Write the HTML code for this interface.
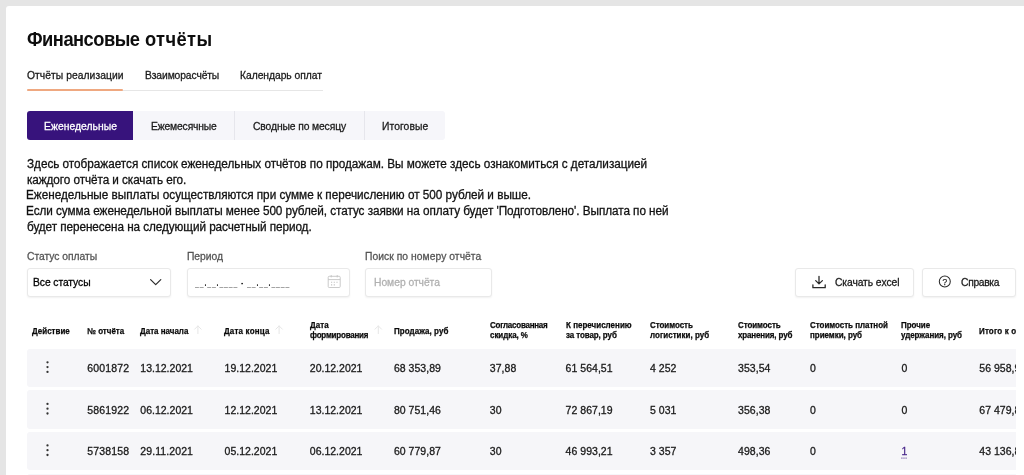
<!DOCTYPE html>
<html lang="ru"><head><meta charset="utf-8"><title>Финансовые отчёты</title>
<style>
html,body{margin:0;padding:0}
body{width:1024px;height:475px;overflow:hidden;background:#e5e5e5;font-family:"Liberation Sans",sans-serif;position:relative}
.card{position:absolute;left:6px;top:6px;width:1018px;height:480px;background:#fff;border-radius:3px 0 0 0}
.abs{position:absolute}
.clip{position:absolute;left:0;top:0;width:1016px;height:475px;overflow:hidden;will-change:transform}
.t{position:absolute;white-space:pre;display:block}
.r{-webkit-text-stroke:0.3px currentColor}
.b{-webkit-text-stroke:0.25px currentColor}
.row{position:absolute;left:27px;width:989px;height:38.4px;background:#f6f6f9;border-radius:3px 0 0 3px}
.inp{position:absolute;box-sizing:border-box;border:1px solid #e9e9e9;border-radius:3px;background:#fff;box-shadow:0 1px 2px rgba(0,0,0,.06)}
</style></head><body>
<div class="card"></div>
<div style="position:absolute;left:0;top:0;width:1024px;height:475px">
<!-- tabs underline -->
<div class="abs" style="left:27px;top:89.5px;width:296.2px;height:1px;background:#e6e6e6"></div>
<div class="abs" style="left:26.8px;top:88.6px;width:96.4px;height:2px;background:#efa880;border-radius:1px"></div>
<!-- segmented -->
<div class="abs" style="left:27px;top:111.3px;width:418px;height:28.5px;background:#f6f6fa;border-radius:3px"></div>
<div class="abs" style="left:27px;top:111.3px;width:106.3px;height:28.5px;background:#37137c;border-radius:3px 0 0 3px"></div>
<div class="abs" style="left:234.3px;top:111.3px;width:1px;height:28.5px;background:#e6e6ec"></div>
<div class="abs" style="left:363.8px;top:111.3px;width:1px;height:28.5px;background:#e6e6ec"></div>
<!-- inputs -->
<div class="inp" style="left:26.8px;top:268px;width:144px;height:28.6px"></div>
<div class="inp" style="left:187px;top:268px;width:162.6px;height:28.6px"></div>
<div class="inp" style="left:365px;top:268px;width:126.6px;height:28.6px"></div>
<div class="inp" style="left:795.2px;top:268px;width:119px;height:28.6px"></div>
<div class="inp" style="left:922px;top:268px;width:94px;height:28.6px"></div>
<!-- rows -->
<div class="row" style="top:348.7px"></div>
<div class="row" style="top:390.3px"></div>
<div class="row" style="top:431.9px"></div>
<div class="row" style="top:473.5px"></div>
<!-- icons -->
<svg class="abs" style="left:0;top:0;will-change:transform" width="1024" height="475" viewBox="0 0 1024 475" fill="none">
  <!-- chevron -->
  <path d="M150.6 279.6 L155.7 284.7 L160.8 279.6" stroke="#2b2b2b" stroke-width="1.2" stroke-linecap="round" stroke-linejoin="round"/>
  <!-- calendar -->
  <g stroke="#c4c4c4" stroke-width="0.9">
    <rect x="328.2" y="276.3" width="12" height="11.2" rx="1"/>
    <path d="M328.2 279.6H340.2M331.2 275V277.4M337.2 275V277.4"/>
    <path d="M331 282.3h1.2M333.7 282.3h1.2M336.4 282.3h1.2M331 284.9h1.2M333.7 284.9h1.2" stroke-width="1.1"/>
  </g>
  <!-- download -->
  <g stroke="#2b2b2b" stroke-width="1.3" stroke-linecap="round" stroke-linejoin="round">
    <path d="M819 276.3V283.6M815.7 280.6L819 283.9L822.4 280.6"/>
    <path d="M812.9 284.8V287.7H825.2V284.8"/>
  </g>
  <!-- help -->
  <circle cx="944.8" cy="281.5" r="5.5" stroke="#2b2b2b" stroke-width="1.05"/>
  <!-- sort arrows -->
  <g stroke="#e6e6e6" stroke-width="1" stroke-linecap="round" stroke-linejoin="round">
    <path d="M197.9 333.6V325.9M194.6 329.2L197.9 325.9L201.2 329.2"/>
    <path d="M279.1 333.6V325.9M275.8 329.2L279.1 325.9L282.4 329.2"/>
    <path d="M378.3 333.6V325.9M375 329.2L378.3 325.9L381.6 329.2"/>
  </g>
  <!-- kebabs -->
  <g fill="#333">
    <circle cx="47.5" cy="362.3" r="1.15"/><circle cx="47.5" cy="367.1" r="1.15"/><circle cx="47.5" cy="371.9" r="1.15"/>
    <circle cx="47.5" cy="403.9" r="1.15"/><circle cx="47.5" cy="408.7" r="1.15"/><circle cx="47.5" cy="413.5" r="1.15"/>
    <circle cx="47.5" cy="445.4" r="1.15"/><circle cx="47.5" cy="450.2" r="1.15"/><circle cx="47.5" cy="455.0" r="1.15"/>
  </g>
  <!-- dotted underline for link -->
  <path d="M901.3 458.1H907" stroke="#4b2a8c" stroke-width="0.9" stroke-dasharray="1.2 0.9"/>
  <text x="944.8" y="284.5" font-family="Liberation Sans, sans-serif" font-size="8.4" font-weight="400" fill="#2b2b2b" stroke="#2b2b2b" stroke-width="0.25" text-anchor="middle">?</text>
</svg>
<span class="abs" style="left:195.4px;top:274.8px;font-size:10.9px;line-height:14px;color:#2a2a2a;font-weight:700;letter-spacing:1.39px;white-space:pre;transform:scaleX(0.632);transform-origin:0 0">__.__.____ - __.__.____</span>

<div class="clip">
<span class="t" style="left:26.90px;top:24.81px;font-size:20.8px;line-height:27.04px;font-weight:700;color:#0d0d0d;letter-spacing:-0.578px;transform:scaleX(0.88);transform-origin:0 0">Финансовые</span>
<span class="t" style="left:144.90px;top:24.81px;font-size:20.8px;line-height:27.04px;font-weight:700;color:#0d0d0d;letter-spacing:0.452px;transform:scaleX(0.88);transform-origin:0 0">отчёты</span>
<span class="t r" style="left:26.80px;top:67.80px;font-size:11.1px;line-height:14.43px;font-weight:400;color:#1a1a1a;letter-spacing:0.048px;transform:scaleX(0.93);transform-origin:0 0">Отчёты реализации</span>
<span class="t r" style="left:144.60px;top:67.80px;font-size:11.1px;line-height:14.43px;font-weight:400;color:#1a1a1a;letter-spacing:-0.129px;transform:scaleX(0.93);transform-origin:0 0">Взаиморасчёты</span>
<span class="t r" style="left:240.20px;top:67.80px;font-size:11.1px;line-height:14.43px;font-weight:400;color:#1a1a1a;letter-spacing:-0.050px;transform:scaleX(0.93);transform-origin:0 0">Календарь оплат</span>
<span class="t r" style="left:43.50px;top:118.80px;font-size:11.1px;line-height:14.43px;font-weight:400;color:#ffffff;letter-spacing:0.055px;transform:scaleX(0.93);transform-origin:0 0">Еженедельные</span>
<span class="t r" style="left:151.10px;top:118.80px;font-size:11.1px;line-height:14.43px;font-weight:400;color:#1a1a1a;letter-spacing:-0.158px;transform:scaleX(0.93);transform-origin:0 0">Ежемесячные</span>
<span class="t r" style="left:252.70px;top:118.80px;font-size:11.1px;line-height:14.43px;font-weight:400;color:#1a1a1a;letter-spacing:-0.122px;transform:scaleX(0.93);transform-origin:0 0">Сводные по месяцу</span>
<span class="t r" style="left:381.60px;top:118.80px;font-size:11.1px;line-height:14.43px;font-weight:400;color:#1a1a1a;letter-spacing:0.075px;transform:scaleX(0.93);transform-origin:0 0">Итоговые</span>
<span class="t r" style="left:26.80px;top:156.01px;font-size:12.5px;line-height:16.25px;font-weight:400;color:#111111;letter-spacing:-0.024px;transform:scaleX(0.94);transform-origin:0 0">Здесь отображается список еженедельных отчётов по продажам. Вы можете здесь ознакомиться с детализацией</span>
<span class="t r" style="left:26.80px;top:171.66px;font-size:12.5px;line-height:16.25px;font-weight:400;color:#111111;letter-spacing:-0.074px;transform:scaleX(0.94);transform-origin:0 0">каждого отчёта и скачать его.</span>
<span class="t r" style="left:25.86px;top:187.32px;font-size:12.5px;line-height:16.25px;font-weight:400;color:#111111;letter-spacing:-0.010px;transform:scaleX(0.94);transform-origin:0 0">Еженедельные выплаты осуществляются при сумме к перечислению от 500 рублей и выше.</span>
<span class="t r" style="left:25.86px;top:202.96px;font-size:12.5px;line-height:16.25px;font-weight:400;color:#111111;letter-spacing:-0.057px;transform:scaleX(0.94);transform-origin:0 0">Если сумма еженедельной выплаты менее 500 рублей, статус заявки на оплату будет 'Подготовлено'. Выплата по ней</span>
<span class="t r" style="left:26.80px;top:218.62px;font-size:12.5px;line-height:16.25px;font-weight:400;color:#111111;letter-spacing:-0.073px;transform:scaleX(0.94);transform-origin:0 0">будет перенесена на следующий расчетный период.</span>
<span class="t r" style="left:26.80px;top:248.80px;font-size:11.1px;line-height:14.43px;font-weight:400;color:#555555;letter-spacing:-0.027px;transform:scaleX(0.93);transform-origin:0 0">Статус оплаты</span>
<span class="t r" style="left:187.00px;top:248.80px;font-size:11.1px;line-height:14.43px;font-weight:400;color:#555555;letter-spacing:-0.059px;transform:scaleX(0.93);transform-origin:0 0">Период</span>
<span class="t r" style="left:365.20px;top:248.80px;font-size:11.1px;line-height:14.43px;font-weight:400;color:#555555;letter-spacing:0.050px;transform:scaleX(0.93);transform-origin:0 0">Поиск по номеру отчёта</span>
<span class="t r" style="left:33.40px;top:274.50px;font-size:11.1px;line-height:14.43px;font-weight:400;color:#000000;letter-spacing:-0.087px;transform:scaleX(0.93);transform-origin:0 0">Все статусы</span>
<span class="t r" style="left:373.80px;top:274.50px;font-size:11.1px;line-height:14.43px;font-weight:400;color:#b0b0b0;letter-spacing:-0.038px;transform:scaleX(0.93);transform-origin:0 0">Номер отчёта</span>
<span class="t r" style="left:834.60px;top:274.50px;font-size:11.1px;line-height:14.43px;font-weight:400;color:#1a1a1a;letter-spacing:-0.108px;transform:scaleX(0.93);transform-origin:0 0">Скачать excel</span>
<span class="t r" style="left:961.00px;top:274.50px;font-size:11.1px;line-height:14.43px;font-weight:400;color:#1a1a1a;letter-spacing:-0.349px;transform:scaleX(0.93);transform-origin:0 0">Справка</span>
<span class="t b" style="left:31.80px;top:325.61px;font-size:8.7px;line-height:11.31px;font-weight:700;color:#0a0a0a;letter-spacing:-0.006px;transform:scaleX(0.92);transform-origin:0 0">Действие</span>
<span class="t b" style="left:87.40px;top:325.61px;font-size:8.7px;line-height:11.31px;font-weight:700;color:#0a0a0a;letter-spacing:0.011px;transform:scaleX(0.92);transform-origin:0 0">№ отчёта</span>
<span class="t b" style="left:140.00px;top:325.61px;font-size:8.7px;line-height:11.31px;font-weight:700;color:#0a0a0a;letter-spacing:-0.006px;transform:scaleX(0.92);transform-origin:0 0">Дата начала</span>
<span class="t b" style="left:224.40px;top:325.61px;font-size:8.7px;line-height:11.31px;font-weight:700;color:#0a0a0a;letter-spacing:0.189px;transform:scaleX(0.92);transform-origin:0 0">Дата конца</span>
<span class="t b" style="left:309.60px;top:320.11px;font-size:8.7px;line-height:11.31px;font-weight:700;color:#0a0a0a;letter-spacing:0.089px;transform:scaleX(0.92);transform-origin:0 0">Дата</span>
<span class="t b" style="left:309.60px;top:330.31px;font-size:8.7px;line-height:11.31px;font-weight:700;color:#0a0a0a;letter-spacing:-0.230px;transform:scaleX(0.92);transform-origin:0 0">формирования</span>
<span class="t b" style="left:393.70px;top:325.61px;font-size:8.7px;line-height:11.31px;font-weight:700;color:#0a0a0a;letter-spacing:0.058px;transform:scaleX(0.92);transform-origin:0 0">Продажа, руб</span>
<span class="t b" style="left:489.80px;top:320.11px;font-size:8.7px;line-height:11.31px;font-weight:700;color:#0a0a0a;letter-spacing:-0.270px;transform:scaleX(0.92);transform-origin:0 0">Согласованная</span>
<span class="t b" style="left:489.80px;top:330.31px;font-size:8.7px;line-height:11.31px;font-weight:700;color:#0a0a0a;letter-spacing:-0.065px;transform:scaleX(0.92);transform-origin:0 0">скидка, %</span>
<span class="t b" style="left:565.60px;top:320.11px;font-size:8.7px;line-height:11.31px;font-weight:700;color:#0a0a0a;letter-spacing:0.015px;transform:scaleX(0.92);transform-origin:0 0">К перечислению</span>
<span class="t b" style="left:565.60px;top:330.31px;font-size:8.7px;line-height:11.31px;font-weight:700;color:#0a0a0a;letter-spacing:-0.103px;transform:scaleX(0.92);transform-origin:0 0">за товар, руб</span>
<span class="t b" style="left:650.00px;top:320.11px;font-size:8.7px;line-height:11.31px;font-weight:700;color:#0a0a0a;letter-spacing:-0.057px;transform:scaleX(0.92);transform-origin:0 0">Стоимость</span>
<span class="t b" style="left:650.00px;top:330.31px;font-size:8.7px;line-height:11.31px;font-weight:700;color:#0a0a0a;letter-spacing:0.020px;transform:scaleX(0.92);transform-origin:0 0">логистики, руб</span>
<span class="t b" style="left:738.00px;top:320.11px;font-size:8.7px;line-height:11.31px;font-weight:700;color:#0a0a0a;letter-spacing:-0.071px;transform:scaleX(0.92);transform-origin:0 0">Стоимость</span>
<span class="t b" style="left:738.00px;top:330.31px;font-size:8.7px;line-height:11.31px;font-weight:700;color:#0a0a0a;letter-spacing:-0.148px;transform:scaleX(0.92);transform-origin:0 0">хранения, руб</span>
<span class="t b" style="left:809.70px;top:320.11px;font-size:8.7px;line-height:11.31px;font-weight:700;color:#0a0a0a;letter-spacing:-0.029px;transform:scaleX(0.92);transform-origin:0 0">Стоимость платной</span>
<span class="t b" style="left:809.70px;top:330.31px;font-size:8.7px;line-height:11.31px;font-weight:700;color:#0a0a0a;letter-spacing:-0.037px;transform:scaleX(0.92);transform-origin:0 0">приемки, руб</span>
<span class="t b" style="left:901.20px;top:320.11px;font-size:8.7px;line-height:11.31px;font-weight:700;color:#0a0a0a;letter-spacing:-0.035px;transform:scaleX(0.92);transform-origin:0 0">Прочие</span>
<span class="t b" style="left:901.20px;top:330.31px;font-size:8.7px;line-height:11.31px;font-weight:700;color:#0a0a0a;letter-spacing:-0.062px;transform:scaleX(0.92);transform-origin:0 0">удержания, руб</span>
<span class="t b" style="left:979.30px;top:325.61px;font-size:8.7px;line-height:11.31px;font-weight:700;color:#0a0a0a;letter-spacing:0.165px;transform:scaleX(0.92);transform-origin:0 0">Итого к оплате</span>
<span class="t r" style="left:87.20px;top:361.90px;font-size:10.5px;line-height:13.65px;font-weight:400;color:#1a1a1a;letter-spacing:0.160px">6001872</span>
<span class="t r" style="left:140.30px;top:361.90px;font-size:10.5px;line-height:13.65px;font-weight:400;color:#1a1a1a;letter-spacing:0.010px">13.12.2021</span>
<span class="t r" style="left:224.60px;top:361.90px;font-size:10.5px;line-height:13.65px;font-weight:400;color:#1a1a1a;letter-spacing:0.010px">19.12.2021</span>
<span class="t r" style="left:309.80px;top:361.90px;font-size:10.5px;line-height:13.65px;font-weight:400;color:#1a1a1a;letter-spacing:0.010px">20.12.2021</span>
<span class="t r" style="left:393.90px;top:361.90px;font-size:10.5px;line-height:13.65px;font-weight:400;color:#1a1a1a;letter-spacing:0.035px">68 353,89</span>
<span class="t r" style="left:489.80px;top:361.90px;font-size:10.5px;line-height:13.65px;font-weight:400;color:#1a1a1a;letter-spacing:0.041px">37,88</span>
<span class="t r" style="left:565.60px;top:361.90px;font-size:10.5px;line-height:13.65px;font-weight:400;color:#1a1a1a;letter-spacing:0.035px">61 564,51</span>
<span class="t r" style="left:650.00px;top:361.90px;font-size:10.5px;line-height:13.65px;font-weight:400;color:#1a1a1a;letter-spacing:0.028px">4 252</span>
<span class="t r" style="left:738.00px;top:361.90px;font-size:10.5px;line-height:13.65px;font-weight:400;color:#1a1a1a;letter-spacing:0.065px">353,54</span>
<span class="t r" style="left:810.00px;top:361.90px;font-size:10.5px;line-height:13.65px;font-weight:400;color:#1a1a1a;letter-spacing:0.000px">0</span>
<span class="t r" style="left:901.40px;top:361.90px;font-size:10.5px;line-height:13.65px;font-weight:400;color:#1a1a1a;letter-spacing:0.000px">0</span>
<span class="t r" style="left:979.30px;top:361.90px;font-size:10.5px;line-height:13.65px;font-weight:400;color:#1a1a1a;letter-spacing:0.035px">56 958,93</span>
<span class="t r" style="left:87.20px;top:403.61px;font-size:10.5px;line-height:13.65px;font-weight:400;color:#1a1a1a;letter-spacing:0.160px">5861922</span>
<span class="t r" style="left:140.30px;top:403.61px;font-size:10.5px;line-height:13.65px;font-weight:400;color:#1a1a1a;letter-spacing:0.010px">06.12.2021</span>
<span class="t r" style="left:224.60px;top:403.61px;font-size:10.5px;line-height:13.65px;font-weight:400;color:#1a1a1a;letter-spacing:0.010px">12.12.2021</span>
<span class="t r" style="left:309.80px;top:403.61px;font-size:10.5px;line-height:13.65px;font-weight:400;color:#1a1a1a;letter-spacing:0.010px">13.12.2021</span>
<span class="t r" style="left:393.90px;top:403.61px;font-size:10.5px;line-height:13.65px;font-weight:400;color:#1a1a1a;letter-spacing:0.035px">80 751,46</span>
<span class="t r" style="left:489.80px;top:403.61px;font-size:10.5px;line-height:13.65px;font-weight:400;color:#1a1a1a;letter-spacing:0.160px">30</span>
<span class="t r" style="left:565.60px;top:403.61px;font-size:10.5px;line-height:13.65px;font-weight:400;color:#1a1a1a;letter-spacing:0.035px">72 867,19</span>
<span class="t r" style="left:650.00px;top:403.61px;font-size:10.5px;line-height:13.65px;font-weight:400;color:#1a1a1a;letter-spacing:0.028px">5 031</span>
<span class="t r" style="left:738.00px;top:403.61px;font-size:10.5px;line-height:13.65px;font-weight:400;color:#1a1a1a;letter-spacing:0.065px">356,38</span>
<span class="t r" style="left:810.00px;top:403.61px;font-size:10.5px;line-height:13.65px;font-weight:400;color:#1a1a1a;letter-spacing:0.000px">0</span>
<span class="t r" style="left:901.40px;top:403.61px;font-size:10.5px;line-height:13.65px;font-weight:400;color:#1a1a1a;letter-spacing:0.000px">0</span>
<span class="t r" style="left:979.30px;top:403.61px;font-size:10.5px;line-height:13.65px;font-weight:400;color:#1a1a1a;letter-spacing:0.035px">67 479,81</span>
<span class="t r" style="left:87.20px;top:445.11px;font-size:10.5px;line-height:13.65px;font-weight:400;color:#1a1a1a;letter-spacing:0.160px">5738158</span>
<span class="t r" style="left:140.30px;top:445.11px;font-size:10.5px;line-height:13.65px;font-weight:400;color:#1a1a1a;letter-spacing:0.096px">29.11.2021</span>
<span class="t r" style="left:224.60px;top:445.11px;font-size:10.5px;line-height:13.65px;font-weight:400;color:#1a1a1a;letter-spacing:0.010px">05.12.2021</span>
<span class="t r" style="left:309.80px;top:445.11px;font-size:10.5px;line-height:13.65px;font-weight:400;color:#1a1a1a;letter-spacing:0.010px">06.12.2021</span>
<span class="t r" style="left:393.90px;top:445.11px;font-size:10.5px;line-height:13.65px;font-weight:400;color:#1a1a1a;letter-spacing:0.035px">60 779,87</span>
<span class="t r" style="left:489.80px;top:445.11px;font-size:10.5px;line-height:13.65px;font-weight:400;color:#1a1a1a;letter-spacing:0.160px">30</span>
<span class="t r" style="left:565.60px;top:445.11px;font-size:10.5px;line-height:13.65px;font-weight:400;color:#1a1a1a;letter-spacing:0.035px">46 993,21</span>
<span class="t r" style="left:650.00px;top:445.11px;font-size:10.5px;line-height:13.65px;font-weight:400;color:#1a1a1a;letter-spacing:0.028px">3 357</span>
<span class="t r" style="left:738.00px;top:445.11px;font-size:10.5px;line-height:13.65px;font-weight:400;color:#1a1a1a;letter-spacing:0.065px">498,36</span>
<span class="t r" style="left:810.00px;top:445.11px;font-size:10.5px;line-height:13.65px;font-weight:400;color:#1a1a1a;letter-spacing:0.000px">0</span>
<span class="t r" style="left:901.40px;top:445.11px;font-size:10.5px;line-height:13.65px;font-weight:400;color:#4b2a8c;letter-spacing:0.000px">1</span>
<span class="t r" style="left:979.30px;top:445.11px;font-size:10.5px;line-height:13.65px;font-weight:400;color:#1a1a1a;letter-spacing:0.035px">43 136,85</span>
</div>
</div></body></html>
